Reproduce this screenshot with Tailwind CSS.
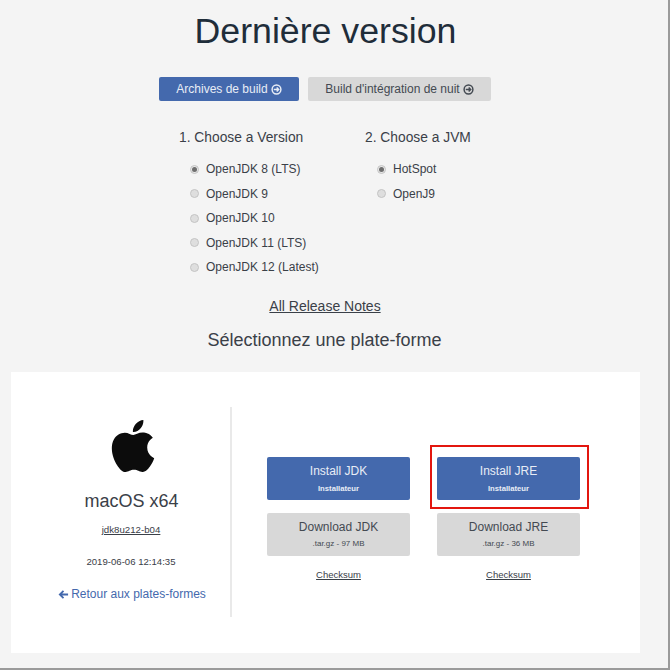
<!DOCTYPE html>
<html lang="fr">
<head>
    <meta charset="UTF-8">
    <meta name="viewport" content="width=device-width, initial-scale=1.0">
    <title>Dernière version</title>
    <script src="https://cdn.jsdelivr.net/npm/@tailwindcss/browser@4"></script>
</head>
<body class="relative bg-white font-['Liberation_Sans',Arial,sans-serif] overflow-hidden">
    <main class="w-[670px] h-[670px] bg-[#f4f4f4] border-r-2 border-b-2 border-[#9a9a9a] overflow-hidden text-[#3a4048]">
        <h1 class="text-center text-[35.7px] leading-[42px] text-[#1f2d3a] pt-[10px] pr-[17px]">Dernière version</h1>

        <!-- Build type -->
        <div class="flex gap-[9px] mt-[25px] pl-[159px] text-[12px]">
            <button class="w-[140px] h-[24px] rounded-[2px] bg-[#4469ad] text-[#e8edf6] flex items-center justify-center gap-[3px]">
                Archives de build
                <svg class="w-[11px] h-[11px]" viewBox="0 0 12 12" fill="none" stroke="currentColor" stroke-width="1.6"><circle cx="6" cy="6" r="4.8"/><path d="M3 6h5.2M6.2 3.8 8.4 6 6.2 8.2"/></svg>
            </button>
            <button class="w-[183px] h-[24px] rounded-[2px] bg-[#d8d8d8] text-[#444a52] flex items-center justify-center gap-[3px]">
                Build d'intégration de nuit
                <svg class="w-[11px] h-[11px]" viewBox="0 0 12 12" fill="none" stroke="currentColor" stroke-width="1.6"><circle cx="6" cy="6" r="4.8"/><path d="M3 6h5.2M6.2 3.8 8.4 6 6.2 8.2"/></svg>
            </button>
        </div>

        <!-- Version and JVM choice -->
        <div class="flex mt-[28px] pl-[179px]">
            <div class="w-[186px]">
                <h2 class="text-[13.8px] leading-[18px]">1. Choose a Version</h2>
                <ul class="mt-[15px] pl-[11px] text-[12px] leading-[14px] flex flex-col gap-[10.5px]">
                    <li class="flex items-center gap-[7px]"><span class="w-[9px] h-[9px] rounded-full border border-[#c4c4c4] bg-[#e8e8e8] flex items-center justify-center"><span class="w-[5px] h-[5px] rounded-full bg-[#6e6e6e]"></span></span>OpenJDK 8 (LTS)</li>
                    <li class="flex items-center gap-[7px]"><span class="w-[9px] h-[9px] rounded-full border border-[#c4c4c4] bg-[#dedede]"></span>OpenJDK 9</li>
                    <li class="flex items-center gap-[7px]"><span class="w-[9px] h-[9px] rounded-full border border-[#c4c4c4] bg-[#dedede]"></span>OpenJDK 10</li>
                    <li class="flex items-center gap-[7px]"><span class="w-[9px] h-[9px] rounded-full border border-[#c4c4c4] bg-[#dedede]"></span>OpenJDK 11 (LTS)</li>
                    <li class="flex items-center gap-[7px]"><span class="w-[9px] h-[9px] rounded-full border border-[#c4c4c4] bg-[#dedede]"></span>OpenJDK 12 (Latest)</li>
                </ul>
            </div>
            <div>
                <h2 class="text-[13.8px] leading-[18px]">2. Choose a JVM</h2>
                <ul class="mt-[15px] pl-[12px] text-[12px] leading-[14px] flex flex-col gap-[10.5px]">
                    <li class="flex items-center gap-[7px]"><span class="w-[9px] h-[9px] rounded-full border border-[#c4c4c4] bg-[#e8e8e8] flex items-center justify-center"><span class="w-[5px] h-[5px] rounded-full bg-[#6e6e6e]"></span></span>HotSpot</li>
                    <li class="flex items-center gap-[7px]"><span class="w-[9px] h-[9px] rounded-full border border-[#c4c4c4] bg-[#dedede]"></span>OpenJ9</li>
                </ul>
            </div>
        </div>

        <p class="mt-[23px] text-center text-[14px] leading-[18px] underline pr-[18px]">All Release Notes</p>
        <h2 class="mt-[14px] text-center text-[18px] leading-[22px] pr-[19px]">Sélectionnez une plate-forme</h2>

        <!-- Platform card -->
        <section class="ml-[11px] mt-[21px] w-[629px] h-[281px] bg-white flex pt-[35px]">
            <div class="w-[221px] h-[210px] pl-[24px] border-r-2 border-[#e9e9e9] flex flex-col items-center shrink-0">
                <svg class="w-[52px] h-[52px] mt-[13px] text-[#0c0c0c]" viewBox="0 0 24 24" fill="currentColor"><path d="M12.152 6.896c-.948 0-2.415-1.078-3.96-1.04-2.04.027-3.91 1.183-4.961 3.014-2.117 3.675-.546 9.103 1.519 12.09 1.013 1.454 2.208 3.09 3.792 3.039 1.52-.065 2.09-.987 3.935-.987 1.831 0 2.35.987 3.96.948 1.637-.026 2.676-1.48 3.676-2.948 1.156-1.688 1.636-3.325 1.662-3.415-.039-.013-3.182-1.221-3.22-4.857-.026-3.04 2.48-4.494 2.597-4.559-1.429-2.09-3.623-2.324-4.39-2.376-2-.156-3.675 1.09-4.61 1.09zM15.53 3.83c.843-1.012 1.4-2.427 1.245-3.83-1.207.052-2.662.805-3.532 1.818-.78.896-1.454 2.338-1.273 3.714 1.338.104 2.715-.688 3.559-1.701"/></svg>
                <p class="mt-[18px] text-[18px] leading-[22px] pr-[2px]">macOS x64</p>
                <a class="mt-[12px] text-[9.7px] leading-[12px] underline pr-[3px]">jdk8u212-b04</a>
                <p class="mt-[20px] text-[9.6px] leading-[12px] pr-[3px]">2019-06-06 12:14:35</p>
                <a class="mt-[19px] text-[12px] leading-[14px] text-[#4469ad] flex items-center gap-[2px] pr-[1px]">
                    <svg class="w-[11px] h-[11px]" viewBox="0 0 12 12" fill="none" stroke="currentColor" stroke-width="2"><path d="M11 6H2M6 2 2 6l4 4"/></svg>
                    Retour aux plates-formes
                </a>
            </div>

            <div class="flex pl-[35px] pt-[50px] gap-[27px]">
                <div class="w-[143px] flex flex-col items-center">
                    <button class="w-full h-[43px] rounded-[2px] bg-[#4469ad] text-[#e8edf6] flex flex-col items-center justify-center gap-[6px]">
                        <span class="text-[12px] leading-[14px]">Install JDK</span>
                        <span class="text-[7.7px] leading-[9px] font-bold">Installateur</span>
                    </button>
                    <button class="mt-[13px] pb-[2px] w-full h-[43px] rounded-[2px] bg-[#d8d8d8] text-[#444a52] flex flex-col items-center justify-center gap-[5px]">
                        <span class="text-[12px] leading-[14px]">Download JDK</span>
                        <span class="text-[8px] leading-[9px]">.tar.gz - 97 MB</span>
                    </button>
                    <a class="mt-[13px] text-[9.5px] leading-[12px] underline">Checksum</a>
                </div>
                <div class="relative w-[143px] flex flex-col items-center">
                    <span class="absolute -left-[7px] -right-[9px] -top-[12px] h-[64px] border-2 border-[#e3160f]"></span>
                    <button class="w-full h-[43px] rounded-[2px] bg-[#4469ad] text-[#e8edf6] flex flex-col items-center justify-center gap-[6px]">
                        <span class="text-[12px] leading-[14px]">Install JRE</span>
                        <span class="text-[7.7px] leading-[9px] font-bold">Installateur</span>
                    </button>
                    <button class="mt-[13px] pb-[2px] w-full h-[43px] rounded-[2px] bg-[#d8d8d8] text-[#444a52] flex flex-col items-center justify-center gap-[5px]">
                        <span class="text-[12px] leading-[14px]">Download JRE</span>
                        <span class="text-[8px] leading-[9px]">.tar.gz - 36 MB</span>
                    </button>
                    <a class="mt-[13px] text-[9.5px] leading-[12px] underline">Checksum</a>
                </div>
            </div>
        </section>
    </main>
</body>
</html>
